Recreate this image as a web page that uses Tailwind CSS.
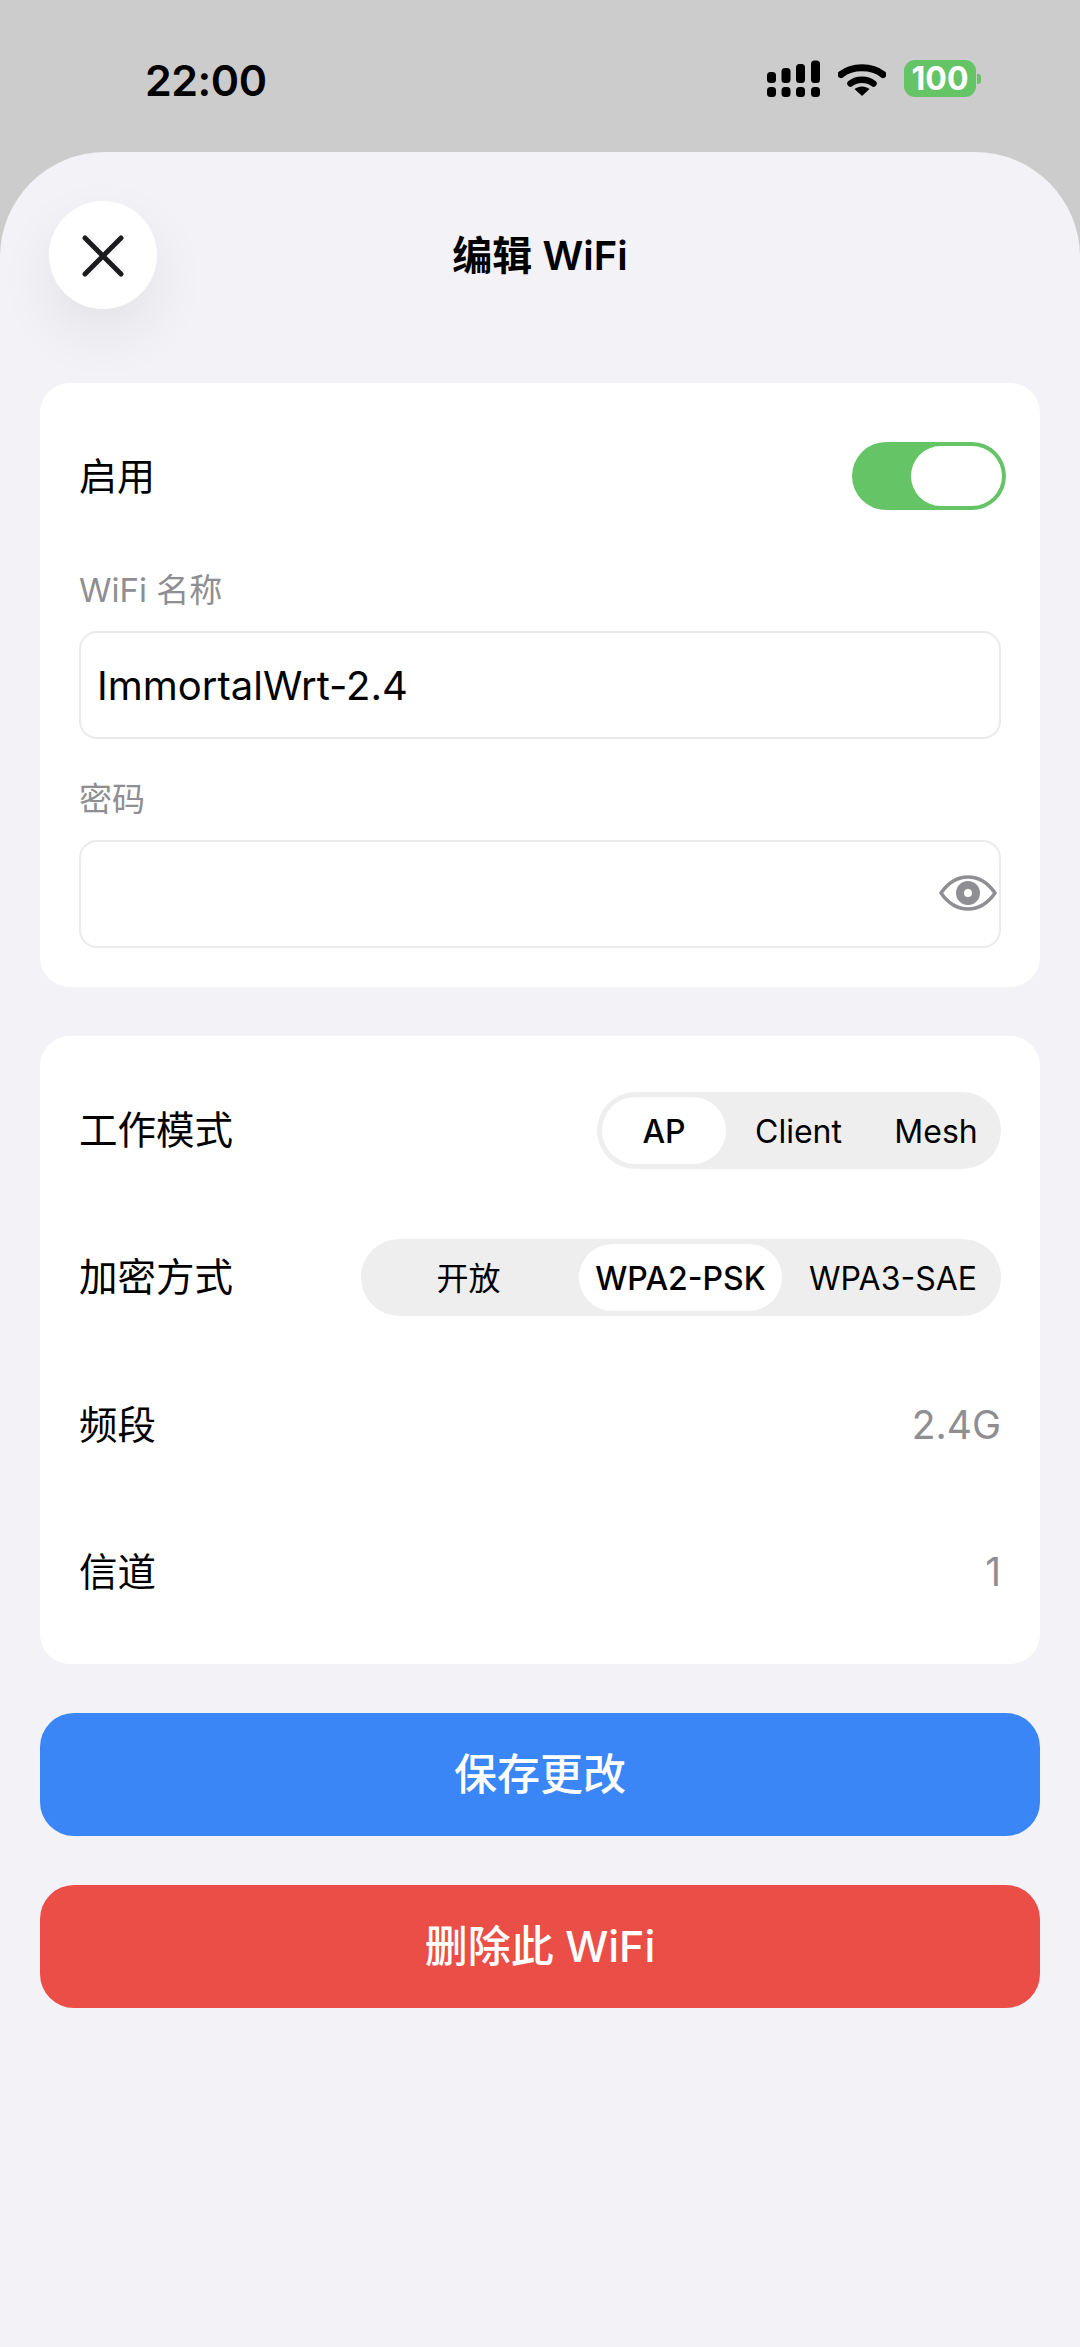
<!doctype html>
<html lang="zh">
<head>
<meta charset="utf-8">
<script src="https://cdn.jsdelivr.net/npm/@tailwindcss/browser@4"></script>
</head>
<body class="m-0">
<div class="w-[1080px] h-[2347px] bg-[#cccccc] overflow-hidden flex flex-col font-['Inter','Noto_Sans_CJK_SC',sans-serif] text-black">
  <div class="h-[152px] shrink-0 flex items-start justify-between pl-[145px] pr-[99px]">
    <div class="mt-[52px] text-[43px] leading-[56px] font-semibold tracking-[-0.5px]">22:00</div>
    <div class="mt-[60px] flex items-start">
      <svg width="54" height="38" viewBox="0 0 54 38" class="fill-black">
        <rect x="0" y="12" width="9" height="11" rx="3.5"/><rect x="14.5" y="8" width="9" height="15" rx="3.5"/><rect x="29" y="4" width="9" height="19" rx="3.5"/><rect x="44" y="0.5" width="9" height="22.5" rx="3.5"/>
        <rect x="0" y="27" width="9" height="10" rx="3.5"/><rect x="14.5" y="27" width="9" height="10" rx="3.5"/><rect x="29" y="27" width="9" height="10" rx="3.5"/><rect x="44" y="27" width="9" height="10" rx="3.5"/>
      </svg>
      <svg width="48" height="36" viewBox="0 0 48 36" class="ml-[17px] mt-[2px]" fill="none">
        <path d="M3 12.500C14 3.500 34 3.500 45 12.500" stroke="#000" stroke-width="7" stroke-linecap="round"/>
        <path d="M12.500 21.500C19 16.500 29 16.500 35.500 21.500" stroke="#000" stroke-width="6.500" stroke-linecap="round"/>
        <path d="M16.500 27C21 23.500 27 23.500 31.500 27L24 34Z" fill="#000"/>
      </svg>
      <div class="ml-[18px] w-[72px] h-[37px] rounded-[11px] bg-[#65c466] flex items-center justify-center text-white text-[32px] leading-none font-bold">100</div>
      <div class="ml-[1px] mt-[14px] w-[4px] h-[10px] rounded-r-[3px] bg-[#65c466]"></div>
    </div>
  </div>

  <div class="flex-1 bg-[#f2f2f7] rounded-t-[105px] px-[40px] pt-[49px]">
    <div class="grid grid-cols-[117px_1fr_117px] items-center">
      <button class="ml-[9px] w-[108px] h-[108px] rounded-full bg-white shadow-[0_24px_60px_rgba(0,0,0,0.07)] flex items-center justify-center">
        <svg width="42" height="42" viewBox="0 0 42 42" fill="none" stroke="#1c1c1e" stroke-width="5" stroke-linecap="round" class="mt-[1px]"><path d="M3 3L39 39M39 3L3 39"/></svg>
      </button>
      <div class="text-center text-[40px] leading-[54px] pt-[2px] font-semibold">编辑 WiFi</div>
      <div></div>
    </div>

    <section class="mt-[74px] bg-white rounded-[30px] pt-[59px] pb-[39px] pl-[39px] pr-[39px]">
      <div class="flex items-center justify-between">
        <span class="text-[38px] leading-[52px]">启用</span>
        <div class="-mr-[5px] w-[154px] h-[68px] rounded-full bg-[#65c466] p-[4px] flex justify-end">
          <div class="w-[91px] h-[60px] rounded-full bg-white"></div>
        </div>
      </div>
      <div class="mt-[58px] h-[44px] pt-[2px] flex items-center text-[33px] text-[#8e8e93]">WiFi 名称</div>
      <div class="mt-[19px] h-[108px] rounded-[18px] border-2 border-[#ebebee] pl-[16px] pt-[2px] flex items-center text-[40px]">ImmortalWrt-2.4</div>
      <div class="mt-[39px] h-[44px] flex items-center text-[33px] text-[#8e8e93]">密码</div>
      <div class="mt-[18px] h-[108px] rounded-[18px] border-2 border-[#ebebee] flex items-center justify-end pr-[2px]">
        <svg width="58" height="36" viewBox="0 0 58 36" fill="none" class="-mt-[2px]">
          <path d="M2 18C10 6.500 19 2 29 2S48 6.500 56 18C48 29.500 39 34 29 34S10 29.500 2 18Z" stroke="#8e8e93" stroke-width="3.500" stroke-linejoin="round"/>
          <circle cx="29" cy="18" r="8" stroke="#8e8e93" stroke-width="8"/>
        </svg>
      </div>
    </section>

    <section class="mt-[49px] bg-white rounded-[30px] pt-[21px] pb-[19px] pl-[39px] pr-[39px]">
      <div class="h-[147px] flex items-center justify-between text-[38.5px]">
        <span>工作模式</span>
        <div class="w-[404px] h-[77px] rounded-full bg-[#eeeeee] p-[5px] grid grid-cols-[124px_150px_120px] items-center text-center text-[32px]">
          <div class="h-[67px] pt-[2px] rounded-full bg-white flex items-center justify-center font-medium">AP</div>
          <div class="pt-[2px] pr-[5px]">Client</div>
          <div class="pt-[2px]">Mesh</div>
        </div>
      </div>
      <div class="h-[147px] flex items-center justify-between text-[38.5px]">
        <span>加密方式</span>
        <div class="w-[640px] h-[77px] rounded-full bg-[#eeeeee] p-[5px] grid grid-cols-[213px_203px_214px] items-center text-center text-[32px]">
          <div class="pt-[2px] pr-[8px]">开放</div>
          <div class="h-[67px] pt-[2px] rounded-full bg-white flex items-center justify-center font-medium">WPA2-PSK</div>
          <div class="pt-[2px] pl-[8px] whitespace-nowrap">WPA3-SAE</div>
        </div>
      </div>
      <div class="h-[147px] pt-[2px] flex items-center justify-between text-[38.5px]">
        <span>频段</span><span class="text-[#8e8e93] text-[39px]">2.4G</span>
      </div>
      <div class="h-[147px] pt-[2px] flex items-center justify-between text-[38.5px]">
        <span>信道</span><span class="text-[#8e8e93] text-[39px]">1</span>
      </div>
    </section>

    <button class="mt-[49px] block w-full h-[123px] rounded-[34px] bg-[#3b86f7] text-white text-[43px] font-medium">保存更改</button>
    <button class="mt-[49px] block w-full h-[123px] rounded-[34px] bg-[#ea4e47] text-white text-[43px] font-medium">删除此 WiFi</button>
  </div>
</div>
</body>
</html>
